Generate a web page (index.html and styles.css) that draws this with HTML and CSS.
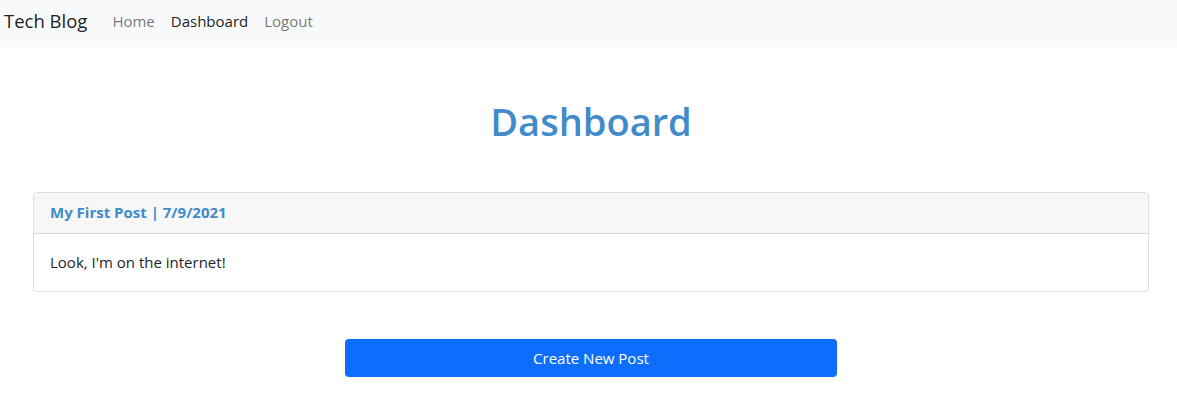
FILE: index.html
```html
<!DOCTYPE html>
<html lang="en">
<head>
<meta charset="utf-8">
<title>Tech Blog</title>
<link rel="stylesheet" href="styles.css">
</head>
<body>
<nav class="navbar">
  <a class="brand" href="#">Tech Blog</a>
  <ul class="nav">
    <li><a class="nav-link" href="#">Home</a></li>
    <li><a class="nav-link active" href="#">Dashboard</a></li>
    <li><a class="nav-link" href="#">Logout</a></li>
  </ul>
</nav>
<main class="content">
  <h1 class="title">Dashboard</h1>
  <section class="card">
    <div class="card-header">My First Post | 7/9/2021</div>
    <div class="card-body">Look, I'm on the internet!</div>
  </section>
  <div class="actions">
    <button class="btn-primary" type="button">Create New Post</button>
  </div>
</main>
</body>
</html>
```
FILE: styles.css
```css
* { box-sizing: border-box; }
html, body { margin: 0; padding: 0; }
body {
  font-family: "Open Sans", "Noto Sans", sans-serif;
  font-size: 15px;
  line-height: 1.5;
  color: #212529;
  background: #fff;
}
.navbar {
  display: flex;
  align-items: center;
  height: 47px;
  background: #f8f9fa;
  padding: 0 4px 5px;
}
.brand {
  font-size: 18.5px;
  color: rgba(0,0,0,.9);
  text-decoration: none;
  margin-right: 17px;
}
.nav {
  list-style: none;
  display: flex;
  margin: 0;
  padding: 0;
}
.nav-link {
  display: block;
  padding: 8px;
  color: rgba(0,0,0,.55);
  text-decoration: none;
}
.nav-link.active { color: rgba(0,0,0,.9); }
.content {
  padding: 0 28px 0 33px;
}
.title {
  margin: 52px 0 47px;
  text-align: center;
  font-size: 38px;
  font-weight: 600;
  line-height: 1.2;
  color: #428bca;
}
.card {
  border: 1px solid rgba(0,0,0,.125);
  border-radius: 4px;
  overflow: hidden;
}
.card-header {
  height: 41px;
  padding: 0 16px;
  display: flex;
  align-items: center;
  background: #f7f7f7;
  border-bottom: 1px solid rgba(0,0,0,.125);
  color: #428bca;
  font-weight: 700;
}
.card-body {
  padding: 16px;
  height: 57px;
  display: flex;
  align-items: center;
}
.actions {
  display: flex;
  justify-content: center;
  margin-top: 47px;
}
.btn-primary {
  width: 492px;
  height: 38px;
  border: 0;
  border-radius: 4px;
  background: #0d6efd;
  color: #fff;
  font-family: inherit;
  font-size: 15px;
}
```
